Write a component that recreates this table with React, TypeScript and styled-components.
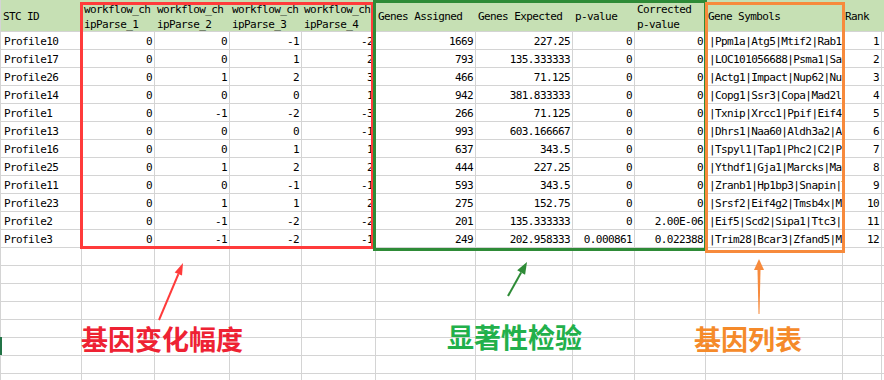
import React from "react";
import styled, { createGlobalStyle } from "styled-components";

const GlobalStyle = createGlobalStyle`
  html, body { margin: 0; padding: 0; background: #ffffff; }
  body { overflow: hidden; }
  #root { width: 884px; height: 380px; }
`;

const COLS = [81, 73, 75, 72, 74, 100, 97, 62, 71, 137, 39, 80];
const COL_TEMPLATE = COLS.map((c) => `${c}px`).join(" ");
const GRID = "#d4d4d4";
const HEAD_BG = "#c6e0b4";

const Sheet = styled.div`
  position: relative;
  width: 884px;
  height: 380px;
  overflow: hidden;
  background: #fff;
`;

const Table = styled.div`
  display: flex;
  flex-direction: column;
  border-left: 1px solid ${GRID};
  font-family: "DejaVu Sans Mono", "Liberation Mono", monospace;
  font-size: 11px;
  letter-spacing: -0.6px;
  color: #000;
`;

const HeaderRow = styled.div`
  display: grid;
  grid-template-columns: ${COL_TEMPLATE};
  height: 32px;
  background: ${HEAD_BG};
  border-bottom: 1px solid ${GRID};
  box-sizing: border-box;
`;

const HeadCell = styled.div<{ $lines: number }>`
  padding: ${(p) => (p.$lines === 2 ? "2px" : "9px")} 0 0 2px;
  line-height: 15px;
  white-space: pre;
`;

const DataRow = styled.div`
  display: grid;
  grid-template-columns: ${COL_TEMPLATE};
  height: 18px;
`;

const Cell = styled.div<{ $num?: boolean }>`
  box-sizing: border-box;
  border-right: 1px solid ${GRID};
  border-bottom: 1px solid ${GRID};
  padding: 2px ${(p) => (p.$num ? "2px" : "0")} 0 ${(p) => (p.$num ? "0" : "3px")};
  line-height: 15px;
  text-align: ${(p) => (p.$num ? "right" : "left")};
  white-space: nowrap;
  overflow: hidden;
`;

const Box = styled.div<{ $color: string; $x: number; $y: number; $w: number; $h: number }>`
  position: absolute;
  box-sizing: border-box;
  left: ${(p) => p.$x}px;
  top: ${(p) => p.$y}px;
  width: ${(p) => p.$w}px;
  height: ${(p) => p.$h}px;
  border: 3px solid ${(p) => p.$color};
  pointer-events: none;
`;

const Label = styled.div<{ $color: string; $x: number; $y: number }>`
  position: absolute;
  left: ${(p) => p.$x}px;
  top: ${(p) => p.$y}px;
  font-family: "Noto Sans CJK SC", "Noto Sans", sans-serif;
  font-weight: 700;
  font-size: 27px;
  line-height: 27px;
  color: ${(p) => p.$color};
  white-space: nowrap;
`;

const SelectMark = styled.div`
  position: absolute;
  left: 0;
  top: 337px;
  width: 2px;
  height: 18px;
  background: #217346;
`;

const ArrowLayer = styled.svg`
  position: absolute;
  left: 0;
  top: 0;
  pointer-events: none;
`;

type Row = [string, number, number, number, number, number, string, string, string, string, number];

const ROWS: Row[] = [
  ["Profile10", 0, 0, -1, -2, 1669, "227.25", "0", "0", "|Ppm1a|Atg5|Mtif2|Rab1a", 1],
  ["Profile17", 0, 0, 1, 2, 793, "135.333333", "0", "0", "|LOC101056688|Psma1|Sat", 2],
  ["Profile26", 0, 1, 2, 3, 466, "71.125", "0", "0", "|Actg1|Impact|Nup62|Nup", 3],
  ["Profile14", 0, 0, 0, 1, 942, "381.833333", "0", "0", "|Copg1|Ssr3|Copa|Mad2l1", 4],
  ["Profile1", 0, -1, -2, -3, 266, "71.125", "0", "0", "|Txnip|Xrcc1|Ppif|Eif4e", 5],
  ["Profile13", 0, 0, 0, -1, 993, "603.166667", "0", "0", "|Dhrs1|Naa60|Aldh3a2|Ac", 6],
  ["Profile16", 0, 0, 1, 1, 637, "343.5", "0", "0", "|Tspyl1|Tap1|Phc2|C2|Ps", 7],
  ["Profile25", 0, 1, 2, 2, 444, "227.25", "0", "0", "|Ythdf1|Gja1|Marcks|Map", 8],
  ["Profile11", 0, 0, -1, -1, 593, "343.5", "0", "0", "|Zranb1|Hp1bp3|Snapin|T", 9],
  ["Profile23", 0, 1, 1, 2, 275, "152.75", "0", "0", "|Srsf2|Eif4g2|Tmsb4x|My", 10],
  ["Profile2", 0, -1, -2, -2, 201, "135.333333", "0", "2.00E-06", "|Eif5|Scd2|Sipa1|Ttc3|I", 11],
  ["Profile3", 0, -1, -2, -1, 249, "202.958333", "0.000861", "0.022388", "|Trim28|Bcar3|Zfand5|Mc", 12],
];

const HEADERS: { text: string; lines: number }[] = [
  { text: "STC ID", lines: 1 },
  { text: "workflow_ch\nipParse_1", lines: 2 },
  { text: "workflow_ch\nipParse_2", lines: 2 },
  { text: "workflow_ch\nipParse_3", lines: 2 },
  { text: "workflow_ch\nipParse_4", lines: 2 },
  { text: "Genes Assigned", lines: 1 },
  { text: "Genes Expected", lines: 1 },
  { text: "p-value", lines: 1 },
  { text: "Corrected\np-value", lines: 2 },
  { text: "Gene Symbols", lines: 1 },
  { text: "Rank", lines: 1 },
  { text: "", lines: 1 },
];

const EMPTY_ROWS = 8;

function Arrow({
  from,
  to,
  color,
  head = 12,
  half = 4,
  width = 2,
  tailWidth,
}: {
  from: [number, number];
  to: [number, number];
  color: string;
  head?: number;
  half?: number;
  width?: number;
  tailWidth?: number;
}) {
  const dx = to[0] - from[0];
  const dy = to[1] - from[1];
  const len = Math.hypot(dx, dy);
  const ux = dx / len;
  const uy = dy / len;
  const px = -uy;
  const py = ux;
  const bx = to[0] - ux * head;
  const by = to[1] - uy * head;
  const tw = tailWidth ?? width;
  const shaft = [
    [bx + (px * width) / 2, by + (py * width) / 2],
    [bx - (px * width) / 2, by - (py * width) / 2],
    [from[0] - (px * tw) / 2, from[1] - (py * tw) / 2],
    [from[0] + (px * tw) / 2, from[1] + (py * tw) / 2],
  ];
  const tip = [
    [to[0], to[1]],
    [bx + px * half, by + py * half],
    [bx - px * half, by - py * half],
  ];
  const pts = (a: number[][]) => a.map((p) => `${p[0].toFixed(1)},${p[1].toFixed(1)}`).join(" ");
  return (
    <g fill={color}>
      <polygon points={pts(shaft)} />
      <polygon points={pts(tip)} />
    </g>
  );
}

export default function App() {
  return (
    <>
      <GlobalStyle />
      <Sheet>
        <Table>
          <HeaderRow>
            {HEADERS.map((h, i) => (
              <HeadCell key={`h${i}`} $lines={h.lines}>
                {h.text}
              </HeadCell>
            ))}
          </HeaderRow>
          {ROWS.map((r, ri) => (
            <DataRow key={`r${ri}`}>
              {r.map((v, ci) => (
                <Cell key={ci} $num={ci !== 0 && ci !== 9}>
                  {v}
                </Cell>
              ))}
              <Cell />
            </DataRow>
          ))}
          {Array.from({ length: EMPTY_ROWS }).map((_, ri) => (
            <DataRow key={`e${ri}`}>
              {COLS.map((_, ci) => (
                <Cell key={ci} />
              ))}
            </DataRow>
          ))}
        </Table>

        <Box $color="#ff3b3b" $x={80} $y={2} $w={294} $h={247} />
        <Box $color="#2e8b37" $x={373} $y={0} $w={334} $h={251} />
        <Box $color="#f78a3c" $x={705} $y={2} $w={140} $h={251} />

        <ArrowLayer width={884} height={380} viewBox="0 0 884 380">
          <Arrow from={[159, 320]} to={[183, 263]} color="#ff3b3b" head={12} half={4} width={2} />
          <Arrow from={[508, 296]} to={[527, 262]} color="#2e8b37" head={12} half={4.5} width={2} />
          <Arrow from={[759, 314]} to={[759, 259]} color="#f78a3c" head={11} half={5} width={3} tailWidth={1} />
        </ArrowLayer>

        <Label $color="#ee2233" $x={81} $y={325}>基因变化幅度</Label>
        <Label $color="#22b04b" $x={447} $y={323}>显著性检验</Label>
        <Label $color="#f58a2a" $x={694} $y={325}>基因列表</Label>

        <SelectMark />
      </Sheet>
    </>
  );
}
